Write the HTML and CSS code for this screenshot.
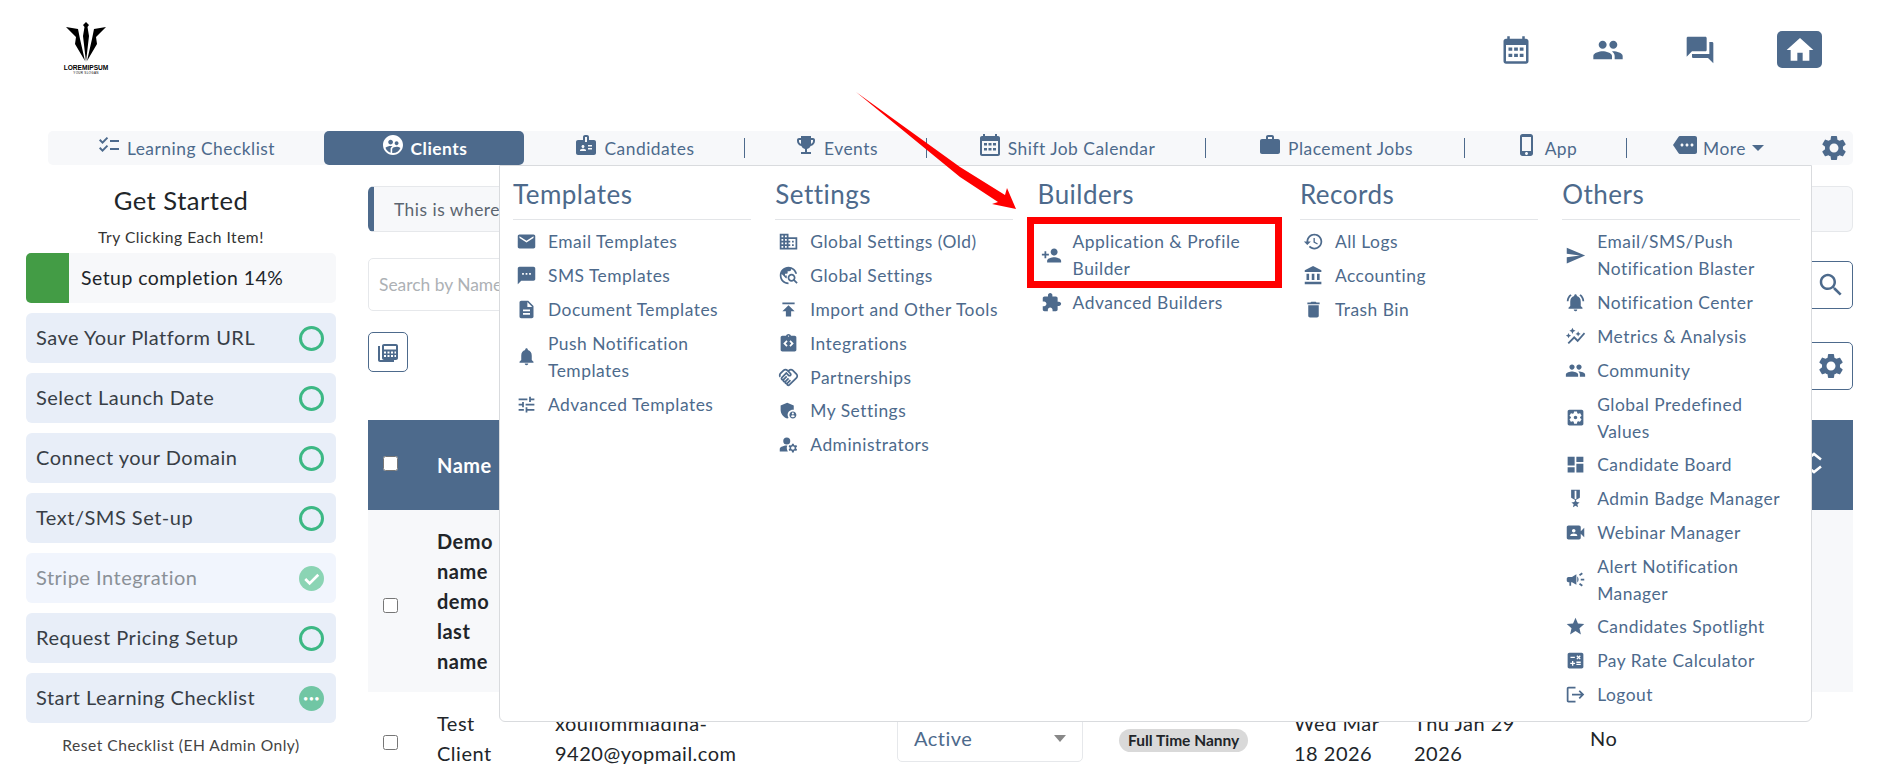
FILE: index.html
```html
<!DOCTYPE html>
<html lang="en">

<head>
    <meta charset="UTF-8">
    <meta name="viewport" content="width=device-width, initial-scale=1.0">
    <title>Clients</title>
    <link rel="stylesheet" href="styles.css">
</head>

<body>

    <!-- Icon sprite -->
    <svg class="sprite" xmlns="http://www.w3.org/2000/svg">
        <symbol id="i-calendar" viewBox="0 0 24 24"><path d="M20 3h-1V1h-2v2H7V1H5v2H4c-1.1 0-2 .9-2 2v16c0 1.1.9 2 2 2h16c1.1 0 2-.9 2-2V5c0-1.1-.9-2-2-2zm0 18H4V8h16v13z"/><path d="M6 10h3v2.500H6zM10.500 10h3v2.500h-3zM15 10h3v2.500h-3zM6 15h3v2.500H6zM10.500 15h3v2.500h-3zM15 15h3v2.500h-3z"/></symbol>
        <symbol id="i-people" viewBox="0 0 24 24"><path d="M16 11c1.660 0 2.990-1.340 2.990-3S17.660 5 16 5c-1.660 0-3 1.340-3 3s1.340 3 3 3zm-8 0c1.660 0 2.990-1.340 2.990-3S9.660 5 8 5C6.340 5 5 6.340 5 8s1.340 3 3 3zm0 2c-2.330 0-7 1.170-7 3.500V19h14v-2.500c0-2.330-4.670-3.500-7-3.500zm8 0c-.29 0-.62.02-.97.05 1.160.84 1.970 1.970 1.970 3.450V19h6v-2.500c0-2.330-4.670-3.500-7-3.500z"/></symbol>
        <symbol id="i-forum" viewBox="0 0 24 24"><path d="M21 6h-2v9H6v2c0 .55.45 1 1 1h11l4 4V7c0-.55-.45-1-1-1zm-4 6V3c0-.55-.45-1-1-1H3c-.55 0-1 .45-1 1v14l4-4h10c.55 0 1-.45 1-1z"/></symbol>
        <symbol id="i-home" viewBox="0 0 24 24"><path d="M10 20v-6h4v6h5v-8h3L12 3 2 12h3v8z"/></symbol>
        <symbol id="i-checklist" viewBox="0 0 24 24"><path d="M22 7h-9v2h9V7zm0 8h-9v2h9v-2zM5.540 11L2 7.460l1.410-1.410 2.120 2.120 4.240-4.240 1.410 1.410L5.540 11zm0 8L2 15.460l1.410-1.410 2.120 2.120 4.240-4.240 1.410 1.410L5.540 19z"/></symbol>
        <symbol id="i-clients" viewBox="0 0 24 24"><path d="M11.990 2c-5.520 0-10 4.480-10 10s4.480 10 10 10 10-4.480 10-10-4.480-10-10-10zm3.610 6.340c1.070 0 1.930.86 1.930 1.930 0 1.070-.86 1.930-1.930 1.930-1.070 0-1.930-.86-1.930-1.930-.01-1.070.86-1.930 1.930-1.930zm-6-1.580c1.300 0 2.360 1.060 2.360 2.360 0 1.300-1.060 2.360-2.360 2.360s-2.360-1.060-2.360-2.360c0-1.310 1.050-2.360 2.360-2.360zm0 9.130v3.750c-2.400-.75-4.300-2.600-5.140-4.960 1.050-1.120 3.670-1.690 5.140-1.690.53 0 1.200.08 1.900.22-1.640.87-1.900 2.020-1.900 2.680zM11.990 20c-.27 0-.53-.01-.79-.04v-4.070c0-1.420 2.940-2.130 4.400-2.130 1.070 0 2.920.39 3.840 1.150-1.170 2.970-4.060 5.090-7.450 5.090z"/></symbol>
        <symbol id="i-badge" viewBox="0 0 24 24"><path d="M20 7h-5V4c0-1.100-.9-2-2-2h-2c-1.100 0-2 .9-2 2v3H4c-1.100 0-2 .9-2 2v11c0 1.100.9 2 2 2h16c1.100 0 2-.9 2-2V9c0-1.100-.9-2-2-2zM9 12c.83 0 1.500.67 1.500 1.500S9.830 15 9 15s-1.500-.67-1.500-1.500S8.170 12 9 12zm3 6H6v-.75c0-1 2-1.500 3-1.500s3 .5 3 1.500V18zm1-9h-2V4h2v5zm5 7.500h-4V15h4v1.500zm0-3h-4V12h4v1.500z"/></symbol>
        <symbol id="i-trophy" viewBox="0 0 24 24"><path d="M19 5h-2V3H7v2H5c-1.100 0-2 .9-2 2v1c0 2.550 1.920 4.630 4.390 4.940.63 1.500 1.980 2.630 3.610 2.960V19H7v2h10v-2h-4v-3.100c1.630-.33 2.980-1.460 3.610-2.960C19.080 12.630 21 10.550 21 8V7c0-1.100-.9-2-2-2zM5 8V7h2v3.820C5.840 10.400 5 9.300 5 8zm14 0c0 1.300-.84 2.400-2 2.820V7h2v1z"/></symbol>
        <symbol id="i-work" viewBox="0 0 24 24"><path d="M20 6h-4V4c0-1.110-.89-2-2-2h-4c-1.110 0-2 .89-2 2v2H4c-1.110 0-1.990.89-1.990 2L2 19c0 1.110.89 2 2 2h16c1.110 0 2-.89 2-2V8c0-1.110-.89-2-2-2zm-6 0h-4V4h4v2z"/></symbol>
        <symbol id="i-phone" viewBox="0 0 24 24"><path d="M15.500 1h-8C6.120 1 5 2.120 5 3.500v17C5 21.880 6.120 23 7.500 23h8c1.380 0 2.500-1.120 2.500-2.500v-17C18 2.120 16.880 1 15.500 1zm-4 21c-.83 0-1.500-.67-1.500-1.500s.67-1.500 1.500-1.500 1.500.67 1.500 1.500-.67 1.500-1.500 1.500zm4.500-4H7V4h9v14z"/></symbol>
        <symbol id="i-more" viewBox="0 0 24 24"><path d="M22 3H7c-.69 0-1.230.35-1.590.88L0 12l5.410 8.110c.36.53.9.89 1.590.89h15c1.100 0 2-.9 2-2V5c0-1.100-.9-2-2-2zM9 13.500c-.83 0-1.500-.67-1.500-1.500s.67-1.500 1.500-1.500 1.500.67 1.500 1.500-.67 1.500-1.500 1.500zm5 0c-.83 0-1.500-.67-1.500-1.500s.67-1.500 1.500-1.500 1.500.67 1.500 1.500-.67 1.500-1.500 1.500zm5 0c-.83 0-1.500-.67-1.500-1.500s.67-1.500 1.500-1.500 1.500.67 1.500 1.500-.67 1.500-1.500 1.500z"/></symbol>
        <symbol id="i-settings" viewBox="0 0 24 24"><path d="M19.140 12.940c.04-.3.06-.61.06-.94 0-.32-.02-.64-.07-.94l2.030-1.580c.18-.14.23-.41.12-.61l-1.920-3.320c-.12-.22-.37-.29-.59-.22l-2.390.96c-.5-.38-1.030-.7-1.620-.94l-.36-2.540c-.04-.24-.24-.41-.48-.41h-3.840c-.24 0-.43.17-.47.41l-.36 2.540c-.59.24-1.130.57-1.620.94l-2.390-.96c-.22-.08-.47 0-.59.22L2.740 8.870c-.12.21-.08.47.12.61l2.030 1.580c-.05.3-.09.63-.09.94s.02.64.07.94l-2.030 1.580c-.18.14-.23.41-.12.61l1.920 3.320c.12.22.37.29.59.22l2.390-.96c.5.38 1.030.7 1.620.94l.36 2.540c.05.24.24.41.48.41h3.840c.24 0 .44-.17.47-.41l.36-2.540c.59-.24 1.130-.56 1.620-.94l2.390.96c.22.08.47 0 .59-.22l1.920-3.320c.12-.22.07-.47-.12-.61l-2.010-1.580zM12 15.600c-1.980 0-3.600-1.620-3.600-3.600s1.620-3.600 3.600-3.600 3.600 1.620 3.600 3.600-1.620 3.600-3.600 3.600z"/></symbol>
        <symbol id="i-email" viewBox="0 0 24 24"><path d="M20 4H4c-1.100 0-1.990.9-1.990 2L2 18c0 1.100.9 2 2 2h16c1.100 0 2-.9 2-2V6c0-1.100-.9-2-2-2zm0 4l-8 5-8-5V6l8 5 8-5v2z"/></symbol>
        <symbol id="i-sms" viewBox="0 0 24 24"><path d="M20 2H4c-1.100 0-1.990.9-1.990 2L2 22l4-4h14c1.100 0 2-.9 2-2V4c0-1.100-.9-2-2-2zM9 11H7V9h2v2zm4 0h-2V9h2v2zm4 0h-2V9h2v2z"/></symbol>
        <symbol id="i-doc" viewBox="0 0 24 24"><path d="M14 2H6c-1.100 0-1.990.9-1.990 2L4 20c0 1.100.89 2 1.990 2H18c1.100 0 2-.9 2-2V8l-6-6zm2 16H8v-2h8v2zm0-4H8v-2h8v2zm-3-5V3.500L18.500 9H13z"/></symbol>
        <symbol id="i-bell" viewBox="0 0 24 24"><path d="M12 22c1.100 0 2-.9 2-2h-4c0 1.100.89 2 2 2zm6-6v-5c0-3.070-1.640-5.640-4.500-6.320V4c0-.83-.67-1.500-1.500-1.500s-1.500.67-1.500 1.500v.68C7.630 5.360 6 7.920 6 11v5l-2 2v1h16v-1l-2-2z"/></symbol>
        <symbol id="i-tune" viewBox="0 0 24 24"><path d="M3 17v2h6v-2H3zM3 5v2h10V5H3zm10 16v-2h8v-2h-8v-2h-2v6h2zM7 9v2H3v2h4v2h2V9H7zm14 4v-2H11v2h10zm-6-4h2V7h4V5h-4V3h-2v6z"/></symbol>
        <symbol id="i-domain" viewBox="0 0 24 24"><path d="M12 7V3H2v18h20V7H12zM6 19H4v-2h2v2zm0-4H4v-2h2v2zm0-4H4V9h2v2zm0-4H4V5h2v2zm4 12H8v-2h2v2zm0-4H8v-2h2v2zm0-4H8V9h2v2zm0-4H8V5h2v2zm10 12h-8v-2h2v-2h-2v-2h2v-2h-2V9h8v10zm-2-8h-2v2h2v-2zm0 4h-2v2h2v-2z"/></symbol>
        <symbol id="i-explore" viewBox="0 0 24 24"><path d="M19.300 16.900c.4-.7.7-1.500.7-2.400 0-2.500-2-4.500-4.500-4.500S11 12 11 14.500s2 4.500 4.500 4.500c.9 0 1.700-.3 2.400-.7l3.200 3.200 1.400-1.400-3.200-3.200zm-3.800.1c-1.400 0-2.500-1.100-2.500-2.500s1.100-2.500 2.500-2.500 2.500 1.100 2.500 2.500-1.100 2.500-2.500 2.500zM12 20v2C6.480 22 2 17.520 2 12S6.480 2 12 2c4.840 0 8.870 3.440 9.800 8h-2.070c-.64-2.460-2.400-4.470-4.730-5.410V5c0 1.100-.9 2-2 2h-2v2c0 .55-.45 1-1 1H8v2h2v3H9l-4.790-4.790C4.080 10.790 4 11.380 4 12c0 4.410 3.590 8 8 8z"/></symbol>
        <symbol id="i-publish" viewBox="0 0 24 24"><path d="M5 4v2h14V4H5zm0 10h4v6h6v-6h4l-7-7-7 7z"/></symbol>
        <symbol id="i-code" viewBox="0 0 24 24"><path d="M19 3h-4.180C14.400 1.840 13.300 1 12 1c-1.300 0-2.400.84-2.820 2H5c-1.100 0-2 .9-2 2v14c0 1.100.9 2 2 2h14c1.100 0 2-.9 2-2V5c0-1.100-.9-2-2-2zm-8 11.170l-1.410 1.420L6 12l3.590-3.590L11 9.830 8.830 12 11 14.170zm1-9.920c-.41 0-.75-.34-.75-.75s.34-.75.75-.75.75.34.75.75-.34.75-.75.75zm2.410 11.340L13 14.170 15.170 12 13 9.830l1.410-1.420L18 12l-3.590 3.590z"/></symbol>
        <symbol id="i-handshake" viewBox="0 0 24 24"><path d="M12.220 19.850c-.18.18-.5.21-.71 0-.18-.18-.21-.5 0-.71l3.390-3.390-1.410-1.410-3.390 3.390c-.19.2-.51.19-.71 0-.21-.21-.18-.53 0-.71l3.390-3.390-1.410-1.410-3.390 3.390c-.18.18-.5.21-.71 0-.19-.19-.19-.51 0-.71l3.390-3.390-1.420-1.410-3.390 3.390c-.18.18-.5.21-.71 0-.19-.2-.19-.51 0-.71L9.520 8.400l1.870 1.860c.95.95 2.590.94 3.540 0 .98-.98.98-2.560 0-3.540l-1.860-1.860.28-.28c.78-.78 2.050-.78 2.830 0l4.240 4.240c.78.78.78 2.050 0 2.830l-8.200 8.200zm9.610-6.780c1.560-1.560 1.560-4.090 0-5.660l-4.240-4.240c-1.560-1.560-4.090-1.560-5.660 0l-.28.28-.28-.28c-1.560-1.560-4.090-1.560-5.660 0L2.170 6.710c-1.420 1.420-1.550 3.630-.4 5.190l1.450-1.450c-.39-.75-.26-1.700.37-2.330l3.540-3.540c.78-.78 2.050-.78 2.830 0l3.560 3.560c.18.18.21.5 0 .71-.21.21-.53.18-.71 0L9.520 5.570l-5.800 5.790c-.98.97-.98 2.560 0 3.540.39.39.89.63 1.420.7.07.52.3 1.020.7 1.420.4.4.9.63 1.420.7.07.52.3 1.020.7 1.420.4.4.9.63 1.420.7.07.54.31 1.030.7 1.420.47.47 1.100.73 1.770.73.670 0 1.300-.26 1.770-.73l8.210-8.190z"/></symbol>
        <symbol id="i-shield" viewBox="0 0 24 24"><path d="M17 11c.34 0 .67.04 1 .09V6.270L10.500 3 3 6.270v4.910c0 4.540 3.200 8.790 7.500 9.820.55-.13 1.080-.32 1.600-.55-.69-.98-1.100-2.170-1.100-3.450 0-3.310 2.690-6 6-6z"/><path d="M17 13c-2.210 0-4 1.790-4 4s1.790 4 4 4 4-1.790 4-4-1.790-4-4-4zm0 1.380c.62 0 1.120.51 1.120 1.120s-.51 1.120-1.120 1.120-1.120-.51-1.120-1.120.5-1.120 1.120-1.120zm0 5.370c-.93 0-1.740-.46-2.240-1.170.05-.72 1.510-1.080 2.240-1.080s2.190.36 2.240 1.080c-.5.71-1.310 1.170-2.240 1.170z"/></symbol>
        <symbol id="i-admin" viewBox="0 0 24 24"><circle cx="10" cy="8" r="4"/><path d="M10.670 13.020c-.22-.01-.44-.02-.67-.02-2.420 0-4.680.67-6.610 1.820-.88.52-1.390 1.500-1.390 2.530V20h9.260c-.79-1.130-1.260-2.510-1.260-4 0-1.070.25-2.070.67-2.980z"/><path d="M20.750 16c0-.22-.03-.42-.06-.63l1.140-1.010-1-1.730-1.450.49c-.32-.27-.68-.48-1.080-.63L18 11h-2l-.3 1.490c-.4.15-.76.36-1.080.63l-1.450-.49-1 1.730 1.140 1.010c-.03.21-.06.41-.06.63s.03.42.06.63l-1.140 1.010 1 1.730 1.450-.49c.32.27.68.48 1.080.63L16 21h2l.3-1.490c.4-.15.76-.36 1.080-.63l1.450.49 1-1.730-1.140-1.010c.03-.21.06-.41.06-.63zM17 18c-1.100 0-2-.9-2-2s.9-2 2-2 2 .9 2 2-.9 2-2 2z"/></symbol>
        <symbol id="i-person-add" viewBox="0 0 24 24"><path d="M15 12c2.210 0 4-1.790 4-4s-1.790-4-4-4-4 1.790-4 4 1.790 4 4 4zm-9-2V7H4v3H1v2h3v3h2v-3h3v-2H6zm9 4c-2.670 0-8 1.340-8 4v2h16v-2c0-2.660-5.330-4-8-4z"/></symbol>
        <symbol id="i-puzzle" viewBox="0 0 24 24"><path d="M20.500 11H19V7c0-1.100-.9-2-2-2h-4V3.500C13 2.120 11.880 1 10.500 1S8 2.120 8 3.500V5H4c-1.100 0-1.990.9-1.990 2v3.800H3.500c1.490 0 2.700 1.210 2.700 2.700s-1.210 2.700-2.700 2.700H2V20c0 1.100.9 2 2 2h3.800v-1.500c0-1.490 1.210-2.700 2.700-2.700 1.490 0 2.700 1.210 2.700 2.700V22H17c1.100 0 2-.9 2-2v-4h1.500c1.380 0 2.500-1.120 2.500-2.500S21.880 11 20.500 11z"/></symbol>
        <symbol id="i-history" viewBox="0 0 24 24"><path d="M13 3c-4.970 0-9 4.030-9 9H1l3.890 3.890.07.14L9 12H6c0-3.870 3.130-7 7-7s7 3.130 7 7-3.130 7-7 7c-1.930 0-3.680-.79-4.940-2.060l-1.420 1.420C8.270 19.990 10.510 21 13 21c4.970 0 9-4.030 9-9s-4.030-9-9-9zm-1 5v5l4.280 2.540.72-1.210-3.500-2.080V8H12z"/></symbol>
        <symbol id="i-bank" viewBox="0 0 24 24"><path d="M4 10v7h3v-7H4zm6 0v7h3v-7h-3zM2 22h19v-3H2v3zm14-12v7h3v-7h-3zm-4.500-9L2 6v2h19V6l-9.500-5z"/></symbol>
        <symbol id="i-trash" viewBox="0 0 24 24"><path d="M6 19c0 1.100.9 2 2 2h8c1.100 0 2-.9 2-2V7H6v12zM19 4h-3.500l-1-1h-5l-1 1H5v2h14V4z"/></symbol>
        <symbol id="i-send" viewBox="0 0 24 24"><path d="M2.010 21L23 12 2.010 3 2 10l15 2-15 2z"/></symbol>
        <symbol id="i-bell-active" viewBox="0 0 24 24"><path d="M7.580 4.080L6.150 2.650C3.750 4.480 2.170 7.300 2.030 10.500h2c.15-2.650 1.510-4.970 3.550-6.420zm12.390 6.420h2c-.15-3.200-1.730-6.020-4.120-7.850l-1.420 1.430c2.020 1.450 3.390 3.770 3.540 6.420zM18 11c0-3.070-1.640-5.640-4.500-6.320V4c0-.83-.67-1.500-1.500-1.500s-1.500.67-1.500 1.500v.68C7.630 5.360 6 7.920 6 11v5l-2 2v1h16v-1l-2-2v-5zm-6 11c.14 0 .27-.01.4-.04.65-.14 1.180-.58 1.440-1.180.1-.24.15-.5.15-.78h-4c.01 1.100.9 2 2.010 2z"/></symbol>
        <symbol id="i-graph" viewBox="0 0 24 24"><path d="M14.060 9.940L12 9l2.060-.94L15 6l.94 2.060L18 9l-2.060.94L15 12l-.94-2.060zM4 14l.94-2.060L7 11l-2.060-.94L4 8l-.94 2.060L1 11l2.060.94L4 14zm4.500-5l1.090-2.410L12 5.500 9.590 4.410 8.500 2 7.410 4.410 5 5.500l2.410 1.090L8.500 9zm-4 11.500l6-6.010 4 4L23 8.930l-1.410-1.410-7.090 7.970-4-4L3 19l1.500 1.500z"/></symbol>
        <symbol id="i-settings-box" viewBox="0 0 24 24"><path d="M12 10c-1.100 0-2 .9-2 2s.9 2 2 2 2-.9 2-2-.9-2-2-2zm7-7H5c-1.110 0-2 .9-2 2v14c0 1.100.89 2 2 2h14c1.110 0 2-.9 2-2V5c0-1.100-.89-2-2-2zm-1.750 9c0 .23-.02.46-.05.68l1.480 1.160c.13.11.17.3.08.45l-1.400 2.420c-.09.15-.27.21-.43.15l-1.740-.7c-.36.28-.76.51-1.180.69l-.26 1.850c-.03.17-.18.3-.35.3h-2.800c-.17 0-.32-.13-.35-.29l-.26-1.850c-.43-.18-.82-.41-1.180-.69l-1.740.7c-.16.06-.34 0-.43-.15l-1.400-2.420c-.09-.15-.05-.34.08-.45l1.480-1.160c-.03-.23-.05-.46-.05-.69 0-.23.02-.46.05-.68l-1.480-1.160c-.13-.11-.17-.3-.08-.45l1.400-2.420c.09-.15.27-.21.43-.15l1.740.7c.36-.28.76-.51 1.180-.69l.26-1.850c.03-.17.18-.3.35-.3h2.800c.17 0 .32.13.35.29l.26 1.850c.43.18.82.41 1.180.69l1.740-.7c.16-.06.34 0 .43.15l1.400 2.420c.09.15.05.34-.08.45l-1.480 1.160c.03.23.05.46.05.69z"/></symbol>
        <symbol id="i-dashboard" viewBox="0 0 24 24"><path d="M3 13h8V3H3v10zm0 8h8v-6H3v6zm10 0h8V11h-8v10zm0-18v6h8V3h-8z"/></symbol>
        <symbol id="i-medal" viewBox="0 0 24 24"><path d="M17 10.430V2H7v8.430c0 .35.18.68.49.86l4.180 2.510-.99 2.340-3.410.29 2.590 2.240L9.070 22 12 20.230 14.930 22l-.78-3.330 2.590-2.240-3.410-.29-.99-2.340 4.180-2.510c.3-.18.48-.5.48-.86zm-4 1.800l-1 .6-1-.6V3h2v9.230z"/></symbol>
        <symbol id="i-video" viewBox="0 0 24 24"><path d="M18 10.480V6c0-1.100-.9-2-2-2H4c-1.100 0-2 .9-2 2v12c0 1.100.9 2 2 2h12c1.100 0 2-.9 2-2v-4.480l4 3.980v-11l-4 3.980zM10 8c1.100 0 2 .9 2 2s-.9 2-2 2-2-.9-2-2 .9-2 2-2zm4 8H6v-.57c0-.81.48-1.530 1.220-1.850.85-.37 1.790-.58 2.780-.58.99 0 1.930.21 2.780.58.74.32 1.220 1.040 1.220 1.850V16z"/></symbol>
        <symbol id="i-campaign" viewBox="0 0 24 24"><path d="M18 11v2h4v-2h-4zm-2 6.610c.96.71 2.210 1.650 3.200 2.390.4-.53.8-1.070 1.200-1.600-.99-.74-2.240-1.680-3.200-2.400-.4.54-.8 1.080-1.200 1.610zM20.400 5.600c-.4-.53-.8-1.070-1.200-1.600-.99.74-2.240 1.680-3.200 2.400.4.53.8 1.070 1.200 1.600.96-.72 2.210-1.650 3.200-2.400zM4 9c-1.100 0-2 .9-2 2v2c0 1.100.9 2 2 2h1v4h2v-4h1l5 3V6L8 9H4zm11.500 3c0-1.330-.58-2.530-1.500-3.350v6.690c.92-.81 1.500-2.010 1.500-3.340z"/></symbol>
        <symbol id="i-star" viewBox="0 0 24 24"><path d="M12 17.270L18.180 21l-1.640-7.030L22 9.240l-7.190-.61L12 2 9.190 8.630 2 9.240l5.460 4.730L5.820 21z"/></symbol>
        <symbol id="i-calc" viewBox="0 0 24 24"><path d="M19 3H5c-1.100 0-2 .9-2 2v14c0 1.100.9 2 2 2h14c1.100 0 2-.9 2-2V5c0-1.100-.9-2-2-2zm-5.970 4.060L14.090 6l1.410 1.410L16.910 6l1.060 1.060-1.410 1.410 1.410 1.410-1.060 1.060-1.410-1.400-1.410 1.410-1.060-1.060 1.410-1.410-1.410-1.420zm-6.780.66h5v1.500h-5v-1.500zM11.500 16h-2v2H8v-2H6v-1.500h2v-2h1.500v2h2V16zm6.500 1.250h-5v-1.500h5v1.500zm0-2.500h-5v-1.500h5v1.500z"/></symbol>
        <symbol id="i-logout" viewBox="0 0 24 24"><path d="M17 7l-1.410 1.410L18.170 11H8v2h10.170l-2.580 2.580L17 17l5-5zM4 5h8V3H4c-1.100 0-2 .9-2 2v14c0 1.100.9 2 2 2h8v-2H4V5z"/></symbol>
        <symbol id="i-search" viewBox="0 0 24 24"><path d="M15.500 14h-.79l-.28-.27C15.410 12.590 16 11.110 16 9.500 16 5.910 13.090 3 9.500 3S3 5.910 3 9.500 5.910 16 9.500 16c1.610 0 3.090-.59 4.230-1.570l.27.28v.79l5 4.990L20.490 19l-4.990-5zm-6 0C7.010 14 5 11.990 5 9.500S7.010 5 9.500 5 14 7.010 14 9.500 11.990 14 9.500 14z"/></symbol>
        <symbol id="i-calc-stack" viewBox="0 0 24 24"><path d="M4 6H2v14c0 1.100.9 2 2 2h14v-2H4V6z"/><path d="M20 4H8c-1.100 0-2 .9-2 2v12c0 1.100.9 2 2 2h12c1.100 0 2-.9 2-2V6c0-1.100-.9-2-2-2zM10 17H8v-2h2v2zm0-3.500H8v-2h2v2zm3.500 3.500h-2v-2h2v2zm0-3.500h-2v-2h2v2zM17 17h-2v-2h2v2zm0-3.500h-2v-2h2v2zm3 3.500h-1.500v-2H20v2zm0-3.500h-1.500v-2H20v2zM20 9.500H8V6h12v3.500z"/></symbol>
        <symbol id="i-sort" viewBox="0 0 24 24"><path d="M5 8.500l7-5.500 7 5.500M5 15.500l7 5.500 7-5.500" fill="none" stroke="currentColor" stroke-width="2.600"/></symbol>
    </svg>

    <div class="page">

        <!-- Logo and quick icons -->
        <header class="top-header">
            <div class="logo">
                <svg class="logo-mark" viewBox="0 0 40 40">
                    <path d="M20 0l3 3-1.500 2 1.500 9-3 26-3-26 1.500-9L17 3z"/>
                    <path d="M0 5l12 2 2 10 5 22-10-17 1-7z"/>
                    <path d="M40 5l-12 2-2 10-5 22 10-17-1-7z"/>
                </svg>
                <span class="logo-name">LOREMIPSUM</span>
                <span class="logo-sub">YOUR SLOGAN</span>
            </div>
            <div class="quick-icons">
                <a class="quick-icon"><svg class="ic ic-30"><use href="#i-calendar"/></svg></a>
                <a class="quick-icon"><svg class="ic ic-32"><use href="#i-people"/></svg></a>
                <a class="quick-icon"><svg class="ic ic-32"><use href="#i-forum"/></svg></a>
                <a class="quick-icon home"><svg class="ic ic-32"><use href="#i-home"/></svg></a>
            </div>
        </header>

        <!-- Main nav -->
        <nav class="main-nav">
            <a class="nav-item"><svg class="ic"><use href="#i-checklist"/></svg>Learning Checklist</a>
            <a class="nav-item active"><svg class="ic"><use href="#i-clients"/></svg>Clients</a>
            <a class="nav-item sep"><svg class="ic"><use href="#i-badge"/></svg>Candidates</a>
            <a class="nav-item sep"><svg class="ic"><use href="#i-trophy"/></svg>Events</a>
            <a class="nav-item sep"><svg class="ic"><use href="#i-calendar"/></svg>Shift Job Calendar</a>
            <a class="nav-item sep"><svg class="ic"><use href="#i-work"/></svg>Placement Jobs</a>
            <a class="nav-item sep"><svg class="ic"><use href="#i-phone"/></svg>App</a>
            <a class="nav-item"><svg class="ic"><use href="#i-more"/></svg>More<span class="caret"></span></a>
            <a class="nav-gear"><svg class="ic ic-30"><use href="#i-settings"/></svg></a>
        </nav>

        <div class="content">

            <!-- Checklist sidebar -->
            <aside class="sidebar">
                <h2 class="side-title">Get Started</h2>
                <p class="side-sub">Try Clicking Each Item!</p>
                <div class="progress">
                    <div class="progress-fill"></div>
                    <span>Setup completion 14%</span>
                </div>
                <a class="check-item">Save Your Platform URL<span class="state"></span></a>
                <a class="check-item">Select Launch Date<span class="state"></span></a>
                <a class="check-item">Connect your Domain<span class="state"></span></a>
                <a class="check-item">Text/SMS Set-up<span class="state"></span></a>
                <a class="check-item done">Stripe Integration
                    <span class="state">
                        <svg viewBox="0 0 24 24"><path d="M6 12.500l4.200 4.200L18.500 8.400" fill="none" stroke="#fff" stroke-width="2.600"/></svg>
                    </span>
                </a>
                <a class="check-item">Request Pricing Setup<span class="state"></span></a>
                <a class="check-item current">Start Learning Checklist<span class="state">•••</span></a>
                <p class="side-reset">Reset Checklist (EH Admin Only)</p>
            </aside>

            <!-- Clients list -->
            <main class="main">
                <div class="notice">This is where</div>

                <div class="search-row">
                    <input class="search-input" type="text" placeholder="Search by Name">
                    <button class="icon-btn tall"><svg class="ic ic-30"><use href="#i-search"/></svg></button>
                </div>

                <div class="tool-row">
                    <button class="icon-btn small"><svg class="ic"><use href="#i-calc-stack"/></svg></button>
                    <button class="icon-btn tall"><svg class="ic ic-30"><use href="#i-settings"/></svg></button>
                </div>

                <table class="clients">
                    <colgroup>
                        <col class="c-check"><col class="c-name"><col class="c-email"><col class="c-status">
                        <col class="c-tag"><col class="c-date"><col class="c-date2"><col>
                    </colgroup>
                    <thead>
                        <tr>
                            <th class="check-cell"><input type="checkbox"></th>
                            <th>Name</th>
                            <th></th><th></th><th></th><th></th><th></th>
                            <th class="sort-cell"><svg class="ic"><use href="#i-sort"/></svg></th>
                        </tr>
                    </thead>
                    <tbody>
                        <tr class="row-odd">
                            <td class="check-cell"><input type="checkbox"></td>
                            <td class="name-cell"><b>Demo name demo last name</b></td>
                            <td></td><td></td><td></td><td></td><td></td><td></td>
                        </tr>
                        <tr>
                            <td class="check-cell"><input type="checkbox"></td>
                            <td class="name-cell">Test Client</td>
                            <td class="email-cell">xouliommiadina-9420@yopmail.com</td>
                            <td>
                                <div class="status-select">Active<span class="select-caret"></span></div>
                            </td>
                            <td><span class="pill">Full Time Nanny</span></td>
                            <td class="date-cell">Wed Mar 18 2026</td>
                            <td class="date-cell wide">Thu Jan 29 2026</td>
                            <td>No</td>
                        </tr>
                    </tbody>
                </table>
            </main>
        </div>

        <!-- More dropdown -->
        <div class="mega-menu">
            <section class="menu-col">
                <h3>Templates</h3>
                <a class="menu-item"><svg class="ic"><use href="#i-email"/></svg><span>Email Templates</span></a>
                <a class="menu-item"><svg class="ic"><use href="#i-sms"/></svg><span>SMS Templates</span></a>
                <a class="menu-item"><svg class="ic"><use href="#i-doc"/></svg><span>Document Templates</span></a>
                <a class="menu-item"><svg class="ic"><use href="#i-bell"/></svg><span>Push Notification Templates</span></a>
                <a class="menu-item"><svg class="ic"><use href="#i-tune"/></svg><span>Advanced Templates</span></a>
            </section>
            <section class="menu-col">
                <h3>Settings</h3>
                <a class="menu-item"><svg class="ic"><use href="#i-domain"/></svg><span>Global Settings (Old)</span></a>
                <a class="menu-item"><svg class="ic"><use href="#i-explore"/></svg><span>Global Settings</span></a>
                <a class="menu-item"><svg class="ic"><use href="#i-publish"/></svg><span>Import and Other Tools</span></a>
                <a class="menu-item"><svg class="ic"><use href="#i-code"/></svg><span>Integrations</span></a>
                <a class="menu-item"><svg class="ic"><use href="#i-handshake"/></svg><span>Partnerships</span></a>
                <a class="menu-item"><svg class="ic"><use href="#i-shield"/></svg><span>My Settings</span></a>
                <a class="menu-item"><svg class="ic"><use href="#i-admin"/></svg><span>Administrators</span></a>
            </section>
            <section class="menu-col">
                <h3>Builders</h3>
                <a class="menu-item"><svg class="ic"><use href="#i-person-add"/></svg><span>Application &amp; Profile Builder</span></a>
                <a class="menu-item"><svg class="ic"><use href="#i-puzzle"/></svg><span>Advanced Builders</span></a>
            </section>
            <section class="menu-col">
                <h3>Records</h3>
                <a class="menu-item"><svg class="ic"><use href="#i-history"/></svg><span>All Logs</span></a>
                <a class="menu-item"><svg class="ic"><use href="#i-bank"/></svg><span>Accounting</span></a>
                <a class="menu-item"><svg class="ic"><use href="#i-trash"/></svg><span>Trash Bin</span></a>
            </section>
            <section class="menu-col">
                <h3>Others</h3>
                <a class="menu-item"><svg class="ic"><use href="#i-send"/></svg><span>Email/SMS/Push Notification Blaster</span></a>
                <a class="menu-item"><svg class="ic"><use href="#i-bell-active"/></svg><span>Notification Center</span></a>
                <a class="menu-item"><svg class="ic"><use href="#i-graph"/></svg><span>Metrics &amp; Analysis</span></a>
                <a class="menu-item"><svg class="ic"><use href="#i-people"/></svg><span>Community</span></a>
                <a class="menu-item"><svg class="ic"><use href="#i-settings-box"/></svg><span>Global Predefined Values</span></a>
                <a class="menu-item"><svg class="ic"><use href="#i-dashboard"/></svg><span>Candidate Board</span></a>
                <a class="menu-item"><svg class="ic"><use href="#i-medal"/></svg><span>Admin Badge Manager</span></a>
                <a class="menu-item"><svg class="ic"><use href="#i-video"/></svg><span>Webinar Manager</span></a>
                <a class="menu-item"><svg class="ic"><use href="#i-campaign"/></svg><span>Alert Notification Manager</span></a>
                <a class="menu-item"><svg class="ic"><use href="#i-star"/></svg><span>Candidates Spotlight</span></a>
                <a class="menu-item"><svg class="ic"><use href="#i-calc"/></svg><span>Pay Rate Calculator</span></a>
                <a class="menu-item"><svg class="ic"><use href="#i-logout"/></svg><span>Logout</span></a>
            </section>
        </div>

        <!-- Annotation drawn over the screenshot -->
        <svg class="red-arrow" viewBox="0 0 170 125">
            <polygon points="4,2 108,77 153,105 155,98 164,119 140,114 146,112 108,87"/>
        </svg>
        <div class="red-box"></div>
    </div>

</body>

</html>
```

FILE: styles.css
```css
* {
    box-sizing: border-box;
}

html, body {
    margin: 0;
    height: 100%;
    overflow: hidden;
    background-color: #fff;
}

body {
    font-family: "Lato", "Noto Sans", sans-serif;
    font-size: 17.4px;
    letter-spacing: 0.5px;
    color: #212529;
}

.sprite {
    display: none;
}

.page {
    position: relative;
    width: 1884px;
    height: 765px;
    overflow: hidden;
}

.ic {
    width: 24px;
    height: 24px;
    fill: currentColor;
    flex-shrink: 0;
}

.ic-30 {
    width: 30px;
    height: 30px;
}

.ic-32 {
    width: 32px;
    height: 32px;
}

/* Header */
.top-header {
    height: 131px;
    display: flex;
    justify-content: space-between;
    padding: 31px 62px 0 60px;
}

.logo {
    width: 52px;
    height: 52px;
    display: flex;
    flex-direction: column;
    align-items: center;
    color: #000;
    margin-top: -9px;
}

.logo-mark {
    width: 40px;
    height: 40px;
    flex-shrink: 0;
    fill: #000;
}

.logo-name {
    font-family: "Liberation Sans", sans-serif;
    font-size: 6.6px;
    font-weight: 700;
    letter-spacing: 0;
    line-height: 8px;
    margin-top: 2px;
}

.logo-sub {
    font-family: "Liberation Sans", sans-serif;
    font-size: 3px;
    letter-spacing: 0.3px;
    line-height: 3px;
}

.quick-icons {
    display: flex;
    align-items: flex-start;
    gap: 47px;
    color: #4d6a8c;
}

.quick-icon {
    width: 45px;
    height: 37px;
    display: flex;
    align-items: center;
    justify-content: center;
}

.quick-icon.home {
    margin-left: 8px;
    background-color: #4d6a8c;
    color: #fff;
    border-radius: 5px;
}

/* Main nav */
.main-nav {
    height: 34px;
    margin: 0 31px 0 48px;
    display: grid;
    grid-template-columns: 276px 200px 221px 182px 279px 259px 162px 183px 1fr;
    background-color: #f7f8fa;
    border-radius: 5px;
    color: #4d6a8c;
}

.nav-item {
    position: relative;
    display: flex;
    align-items: center;
    justify-content: center;
    gap: 6px;
}

.nav-item .ic {
    margin-top: -6px;
}

.nav-item.active {
    background-color: #4d6a8c;
    color: #fff;
    font-weight: 700;
    border-radius: 5px;
}

.nav-item.sep::after {
    content: "";
    position: absolute;
    right: 0;
    top: 7px;
    width: 1px;
    height: 20px;
    background-color: #4d6a8c;
}

.caret {
    width: 0;
    height: 0;
    border-left: 6px solid transparent;
    border-right: 6px solid transparent;
    border-top: 6px solid #4d6a8c;
}

.nav-gear {
    display: flex;
    align-items: center;
    justify-content: center;
    margin-left: 4px;
}

/* Content */
.content {
    display: flex;
    gap: 32px;
    padding: 0 31px 0 26px;
}

.sidebar {
    width: 310px;
    flex-shrink: 0;
    text-align: center;
}

.side-title {
    margin: 18px 0 10px;
    font-size: 25.6px;
    line-height: 34px;
    font-weight: 400;
}

.side-sub {
    margin: 0 0 6px;
    font-size: 15.6px;
    line-height: 20px;
    color: #333;
}

.progress {
    height: 50px;
    display: flex;
    align-items: center;
    gap: 12px;
    background-color: #f7f8fa;
    border-radius: 5px;
    font-size: 19.4px;
    margin-bottom: 10px;
}

.progress span {
    padding-bottom: 2px;
}

.progress-fill {
    width: 43px;
    height: 50px;
    background-color: #439c45;
    border-radius: 5px 0 0 5px;
}

.check-item {
    height: 50px;
    margin-bottom: 10px;
    padding: 0 12px 2px 10px;
    display: flex;
    align-items: center;
    justify-content: space-between;
    background-color: #e8eef8;
    border-radius: 6px;
    font-size: 20px;
    color: #383e46;
}

.state {
    width: 25px;
    height: 25px;
    margin-top: 2px;
    border: 3px solid #3cb884;
    border-radius: 50%;
    display: flex;
    align-items: center;
    justify-content: center;
    color: #fff;
}

.check-item.done {
    background-color: #f1f5fd;
    color: #8a9097;
}

.check-item.done .state {
    background-color: #8bd4b4;
    border: none;
}

.check-item.current .state {
    background-color: #71c6a4;
    border: none;
    font-size: 9px;
    letter-spacing: 0.5px;
}

.side-reset {
    margin: 12px 0 0;
    font-size: 15.6px;
    line-height: 20px;
    color: #444;
}

.main {
    flex: 1;
    min-width: 0;
    padding-top: 21px;
}

.notice {
    height: 46px;
    display: flex;
    align-items: center;
    padding-left: 20px;
    background-color: #f7f8fa;
    border: 1px solid #e6e8eb;
    border-left: 6px solid #4d6a8c;
    border-radius: 6px;
    color: #5b6570;
}

.search-row {
    margin-top: 26px;
    height: 53px;
    display: flex;
    align-items: center;
    gap: 14px;
}

.search-input {
    flex: 1;
    height: 53px;
    padding: 0 10px;
    border: 1px solid #e6e8eb;
    border-radius: 5px;
    font: inherit;
}

.search-input::placeholder {
    color: #adb1b5;
}

.icon-btn {
    display: flex;
    align-items: center;
    justify-content: center;
    padding: 0;
    background-color: #fff;
    border: 1px solid #4d6a8c;
    border-radius: 5px;
    color: #4d6a8c;
}

.icon-btn.tall {
    width: 120px;
    height: 48px;
    justify-content: flex-end;
    padding-right: 6px;
}

.icon-btn.small {
    width: 40px;
    height: 40px;
}

.tool-row {
    margin-top: 21px;
    height: 58px;
    display: flex;
    justify-content: space-between;
    align-items: flex-start;
}

.tool-row .tall {
    margin-top: 10px;
}

/* Table */
.clients {
    margin-top: 30px;
    width: 100%;
    table-layout: fixed;
    border-collapse: collapse;
    font-size: 20px;
}

.c-check { width: 69px; }
.c-name { width: 118px; }
.c-email { width: 342px; }
.c-status { width: 222px; }
.c-tag { width: 175px; }
.c-date { width: 120px; }
.c-date2 { width: 176px; }

.clients thead tr {
    height: 90px;
    background-color: #4d6a8c;
    color: #fff;
    text-align: left;
}

.clients th,
.clients td {
    padding: 0;
}

.check-cell input {
    display: block;
    width: 15px;
    height: 15px;
    margin: 8px 0 0 15px;
}

.clients th.check-cell input {
    margin: 0 0 4px 15px;
}

.sort-cell {
    text-align: right;
    padding-right: 27px !important;
}

.row-odd {
    height: 182px;
    background-color: #f7f8fa;
}

.clients td {
    line-height: 30px;
    padding-top: 16px;
    padding-bottom: 16px;
}

.name-cell {
    padding-right: 44px !important;
}

.email-cell {
    overflow-wrap: anywhere;
    padding-right: 60px !important;
}

.status-select {
    width: 186px;
    height: 47px;
    padding: 0 16px;
    display: flex;
    align-items: center;
    justify-content: space-between;
    border: 1px solid #e6e8eb;
    border-radius: 5px;
    color: #4d6a8c;
}

.select-caret {
    border-left: 6px solid transparent;
    border-right: 6px solid transparent;
    border-top: 7px solid #888;
}

.pill {
    display: inline-block;
    padding: 0 9px;
    line-height: 23px;
    background-color: #d9d9d9;
    border-radius: 12px;
    font-size: 15.5px;
    font-weight: 700;
    letter-spacing: 0;
}

.date-cell {
    padding-right: 16px !important;
}

.date-cell.wide {
    padding-right: 60px !important;
}

/* Dropdown */
.mega-menu {
    position: absolute;
    left: 499px;
    top: 165px;
    width: 1313px;
    height: 557px;
    display: grid;
    grid-template-columns: repeat(5, 238px);
    column-gap: 24.3px;
    padding: 0 12px 0 13px;
    background-color: #fff;
    border: 1px solid #d9dbde;
    border-radius: 0 0 6px 6px;
    color: #4d6a8c;
}

.menu-col h3 {
    margin: 0 0 5px;
    height: 54px;
    padding-top: 10px;
    font-size: 26px;
    line-height: 36px;
    font-weight: 400;
    border-bottom: 1px solid #e3e5e8;
}

.menu-item {
    display: flex;
    align-items: center;
    gap: 11px;
    padding: 3.4px 0 3.4px 3px;
    line-height: 27px;
}

.menu-item span {
    max-width: 195px;
}

.menu-item .ic {
    width: 21px;
    height: 21px;
}

/* Red annotation */
.red-arrow {
    position: absolute;
    left: 852px;
    top: 90px;
    width: 170px;
    height: 125px;
    fill: #ff0000;
}

.red-box {
    position: absolute;
    left: 1027px;
    top: 217px;
    width: 255px;
    height: 71px;
    border: 7px solid #ff0000;
}
```
